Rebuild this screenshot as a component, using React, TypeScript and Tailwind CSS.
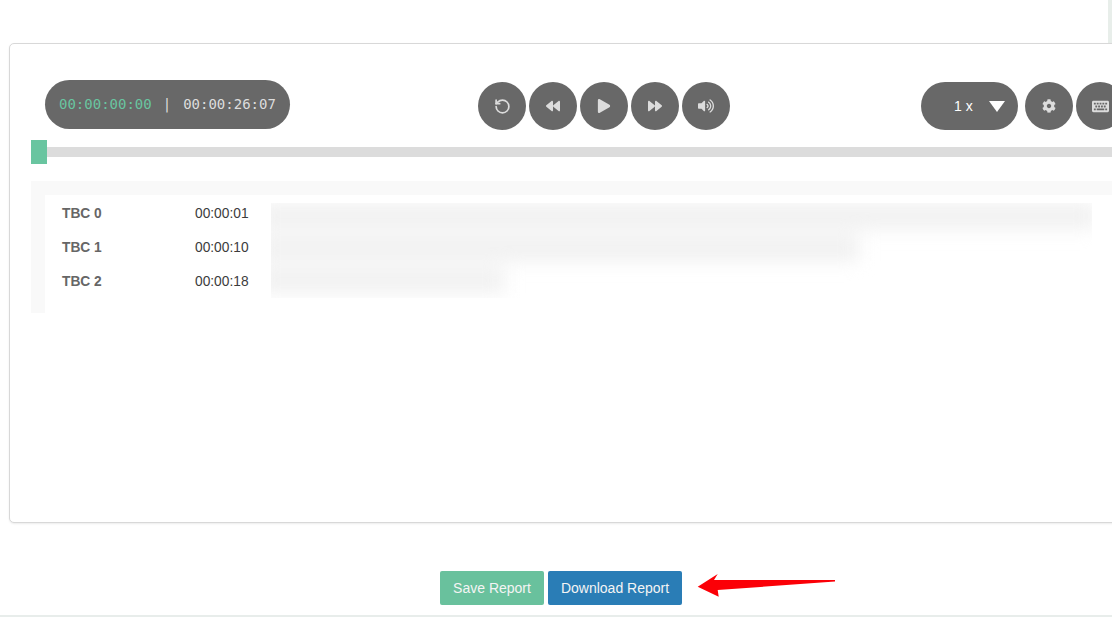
import { FaBackward, FaCog, FaForward, FaKeyboard, FaPlay, FaVolumeUp } from 'react-icons/fa';
import { RotateCcw } from 'lucide-react';

const rows = [
  { label: 'TBC 0', time: '00:00:01' },
  { label: 'TBC 1', time: '00:00:10' },
  { label: 'TBC 2', time: '00:00:18' },
];

function RoundBtn({ children, className = '' }: { children: React.ReactNode; className?: string }) {
  return (
    <button className={`flex h-12 w-12 shrink-0 items-center justify-center rounded-full bg-[#686868] text-[#dcdcdc] ${className}`}>
      {children}
    </button>
  );
}

export default function App() {
  return (
    <div className="flex h-[617px] w-[1112px] flex-col overflow-hidden bg-white font-['Liberation_Sans',Arial,sans-serif]">
      {/* page top, scrollbar-ish strip on the right */}
      <div className="flex h-[43px] shrink-0 justify-end">
        <div className="w-1 bg-[#e8eeea]" />
      </div>

      <div className="ml-[9px] h-[480px] w-[1160px] shrink-0 rounded-l-[5px] border border-[#d8d8d8] bg-white shadow-[0_1px_2px_rgba(0,0,0,0.08)]">
        {/* controls */}
        <div className="ml-[35px] mt-9 flex items-start">
          <div className="flex h-[49px] w-[245px] items-center rounded-full bg-[#686868] pb-[2px] pl-[14px] font-['DejaVu_Sans_Mono',monospace] text-sm whitespace-pre">
            <span className="text-[#69c5a0]">00:00:00:00</span>
            <span className="ml-[11px] text-[#dddddd]">|</span>
            <span className="ml-[12px] text-[#dddddd]">00:00:26:07</span>
          </div>
          <div className="ml-[188px] mt-0.5 flex gap-[3px]">
            <RoundBtn><RotateCcw size={17} strokeWidth={2.4} /></RoundBtn>
            <RoundBtn><FaBackward size={14} /></RoundBtn>
            <RoundBtn><FaPlay size={14} /></RoundBtn>
            <RoundBtn><FaForward size={14} /></RoundBtn>
            <RoundBtn><FaVolumeUp size={16} /></RoundBtn>
          </div>
          <div className="ml-[191px] mt-0.5 flex gap-[7px]">
            <div className="flex h-12 w-[97px] items-center rounded-full bg-[#686868] pl-[33px] text-sm text-white">
              <span>1 x</span>
              <span className="ml-4 h-0 w-0 border-x-[8px] border-t-[11px] border-x-transparent border-t-white" />
            </div>
            <RoundBtn><FaCog size={14} /></RoundBtn>
            <RoundBtn className="-ml-1"><FaKeyboard size={17} /></RoundBtn>
          </div>
        </div>

        {/* seek bar */}
        <div className="ml-[21px] mt-[10px] flex items-center">
          <div className="h-6 w-4 shrink-0 bg-[#69c5a0]" />
          <div className="h-2.5 flex-1 bg-[#dcdcdc]" />
        </div>

        {/* transcript */}
        <div className="ml-[21px] mt-[17px] h-[132px] bg-[#f9f9f9] pl-[14px] pt-[14px]">
          <div className="flex h-[118px] bg-white">
            <div className="w-[226px] shrink-0 pt-[3px] text-[13.75px] text-[#3c3c3c]">
              {rows.map((r) => (
                <div key={r.label} className="flex h-[34px] items-center pb-[2px]">
                  <span className="ml-[17px] w-[133px] font-bold text-[#666666]">{r.label}</span>
                  <span>{r.time}</span>
                </div>
              ))}
            </div>
            <div className="mt-2 h-[95px] w-[821px] overflow-hidden">
              <div className="flex flex-col gap-[6px] blur-[9px]">
                <div className="-ml-3 h-[26px] w-[836px] bg-[#f1f1f1]" />
                <div className="-ml-3 h-[26px] w-[600px] bg-[#f1f1f1]" />
                <div className="-ml-3 h-[26px] w-[245px] bg-[#f1f1f1]" />
              </div>
            </div>
          </div>
        </div>
      </div>

      {/* actions */}
      <div className="ml-[440px] mt-[48px] flex items-center gap-1 text-sm text-[#f4f4f4]">
        <button className="h-[34px] w-[104px] rounded-[2px] bg-[#69c19d]">Save Report</button>
        <button className="h-[34px] w-[134px] rounded-[2px] bg-[#2a7db6]">Download Report</button>
        <svg className="mb-[4px] ml-[8px]" width="142" height="26" viewBox="0 0 142 26">
          <path d="M3.7 13.7 L23.7 1 L20 7 L141 7 L141 8.5 L23.7 17 L24.7 23.7 Z" fill="#fb0007" />
        </svg>
      </div>

      <div className="mt-auto h-0.5 bg-[#e8edeb]" />
    </div>
  );
}
